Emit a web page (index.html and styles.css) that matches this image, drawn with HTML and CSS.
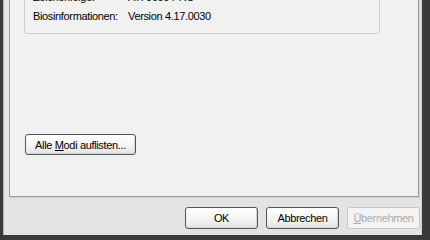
FILE: index.html
```html
<!DOCTYPE html>
<html lang="de">
<head>
<meta charset="utf-8">
<title>Eigenschaften</title>
<link rel="stylesheet" href="styles.css">
</head>
<body>
<div class="window">
  <div class="dialog">
    <div class="panel">
      <div class="group">
        <div class="row"><span class="label">Zeichenfolge:</span><span class="value">ATI 9600 PRO</span></div>
        <div class="row"><span class="label">Biosinformationen:</span><span class="value">Version 4.17.0030</span></div>
      </div>
      <button class="btn list">Alle <u>M</u>odi auflisten...</button>
    </div>
    <div class="actions">
      <button class="btn">OK</button>
      <button class="btn">Abbrechen</button>
      <button class="btn" disabled><u>Ü</u>bernehmen</button>
    </div>
  </div>
</div>
</body>
</html>
```

FILE: styles.css
```css
html, body {
  margin: 0;
  height: 239px;
  overflow: hidden;
}
body {
  background: #3a3a3a;
  font: 11px "Liberation Sans", Arial, sans-serif;
  letter-spacing: -0.35px;
  color: #000;
}
.window {
  display: flex;
  height: 235px;
  padding-left: 3px;
  padding-right: 8px;
}
.dialog {
  flex: 1;
  background: #e3e3e3;
  border-left: 1px solid #b5b5b5;
  border-right: 1px solid #cfcfcf;
  display: flex;
  flex-direction: column;
}
.panel {
  box-sizing: border-box;
  height: 207px;
  margin: -10px 2px 0 5px;
  border: 1px solid #9a9a9a;
  border-top: none;
  background: #f1f1f1;
  box-shadow: 1px 1px 0 #cfcfcf;
  padding-left: 14px;
  display: flex;
  flex-direction: column;
  align-items: flex-start;
}
.group {
  box-sizing: border-box;
  width: 356px;
  height: 60px;
  margin-top: -16px;
  border: 1px solid #cdcdcd;
  border-radius: 3px;
  padding: 0 0 7px 8px;
  display: flex;
  flex-direction: column;
  justify-content: flex-end;
}
.row {
  display: flex;
  height: 19px;
  line-height: 19px;
  white-space: nowrap;
}
.label {
  width: 95px;
}
.btn {
  box-sizing: border-box;
  font: inherit;
  letter-spacing: inherit;
  color: #000;
  height: 22px;
  padding: 0;
  border: 1px solid #555;
  border-radius: 3px;
  background: linear-gradient(#ffffff, #f3f3f3 60%, #e2e2e2);
  box-shadow: inset -1px -1px 0 #d6d6d6;
}
.btn u {
  text-decoration: underline;
}
.list {
  width: 111px;
  height: 21px;
  margin: 100px 0 0 1px;
}
.actions {
  display: flex;
  justify-content: flex-end;
  gap: 8px;
  margin-top: 10px;
  padding-right: 1px;
}
.actions .btn {
  width: 73px;
}
.btn:disabled {
  color: #ababab;
  border-color: #c6c6c6;
  background: #f3f3f3;
  box-shadow: none;
}
```
